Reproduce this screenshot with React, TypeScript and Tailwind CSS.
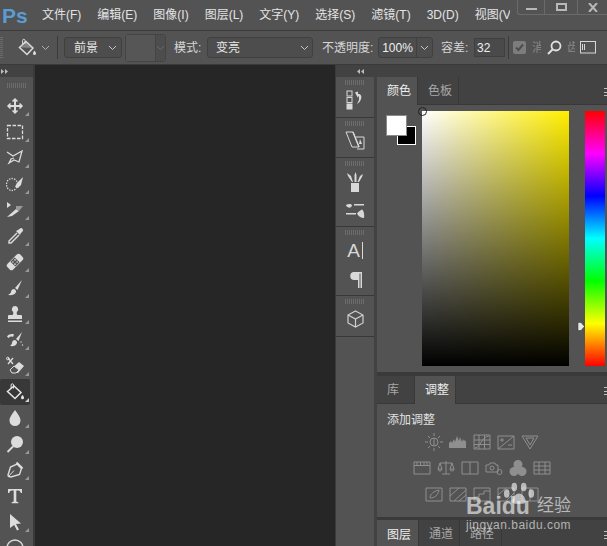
import type { ReactNode } from "react";

// Photoshop workspace: menu bar, options bar, tools, canvas and the docked panels

const menus = ["文件(F)", "编辑(E)", "图像(I)", "图层(L)", "文字(Y)", "选择(S)", "滤镜(T)", "3D(D)", "视图(V)"];

function Chevron({ className = "" }: { className?: string }) {
  return (
    <svg width="9" height="6" viewBox="0 0 9 6" className={className} fill="none" stroke="currentColor" strokeWidth="1">
      <path d="M1 1l3.5 3.5L8 1" />
    </svg>
  );
}

function Bucket({ size = 20 }: { size?: number }) {
  return (
    <svg width={size} height={size} viewBox="0 0 20 20" fill="none" stroke="#dcdcdc" strokeWidth="1.5">
      <path d="M9 3.5l7 6.5-6 6.5-7.5-7z" />
      <path d="M8 6V2.5a1.2 1.2 0 0 0-2.4 0V6" strokeWidth="1" />
      <path d="M4 9.5l5.5-5 6.5 5.5z" fill="#dcdcdc" stroke="none" opacity="0.35" />
      <path d="M17.5 12.5c1 1.4 1.5 2.1 1.5 3a1.5 1.5 0 0 1-3 0c0-.9.5-1.6 1.5-3z" fill="#dcdcdc" stroke="none" />
    </svg>
  );
}

const toolIcons: ReactNode[] = [
  // move
  <g key="move" fill="none" stroke="#dcdcdc" strokeWidth="2">
    <path d="M10 3v14M3 10h14" />
    <path d="M7.5 5.5L10 3l2.5 2.5M7.5 14.5L10 17l2.500-2.500M5.500 7.500L3 10l2.500 2.500M14.500 7.500L17 10l-2.500 2.500" strokeWidth="1.5" />
  </g>,
  // marquee
  <rect key="marquee" x="2.500" y="3.500" width="15" height="13" fill="none" stroke="#dcdcdc" strokeWidth="1.3" strokeDasharray="3.5 1.5" />,
  // lasso
  <path key="lasso" d="M2 4l6 4 9-5-3 11-5-2-5 3 2-4 3-1" fill="none" stroke="#dcdcdc" strokeWidth="1.3" />,
  // quick selection
  <g key="quick">
    <ellipse cx="7" cy="10.5" rx="5.5" ry="6" fill="none" stroke="#dcdcdc" strokeWidth="1.3" strokeDasharray="1.3 1.3" />
    <path d="M18 3l-6 6-2 4 3 1 3-3z" fill="#dcdcdc" />
  </g>,
  // healing slice
  <g key="slice">
    <path d="M2 2l4 3-4 3z" fill="#dcdcdc" />
    <path d="M2 17l9-8 3 2-7 5z" fill="#dcdcdc" />
    <path d="M11 6h7l-4 5-3-2z" fill="#9a9a9a" />
  </g>,
  // eyedropper
  <g key="dropper">
    <path d="M12 7l-8 8v2h2l8-8" fill="none" stroke="#dcdcdc" strokeWidth="1.4" />
    <path d="M11 5l4 4 1-2 1.500-1.500a1.800 1.800 0 0 0-2.800-2.800L13 4z" fill="#dcdcdc" />
  </g>,
  // bandage
  <g key="bandage" transform="rotate(-45 10 10)">
    <rect x="1" y="6" width="18" height="8" rx="2.500" fill="#dcdcdc" />
    <rect x="7" y="6.500" width="6" height="7" fill="#535353" />
    <circle cx="8.500" cy="8.500" r=".8" fill="#dcdcdc" />
    <circle cx="11.500" cy="8.500" r=".8" fill="#dcdcdc" />
    <circle cx="8.500" cy="11.500" r=".8" fill="#dcdcdc" />
    <circle cx="11.500" cy="11.500" r=".8" fill="#dcdcdc" />
  </g>,
  // brush
  <path key="brush" d="M17 2l-7 8 2.500 2zM9 11c-2 0-3 1.500-3 3 0 1-1.500 2-3 3 3 .5 7 0 8-3 .3-1 0-2-2-3z" fill="#dcdcdc" />,
  // stamp
  <path key="stamp" d="M10 2a3.200 3.200 0 0 0-2 5.700c.5.800.5 2.300-.500 3.300H4a1 1 0 0 0-1 1v3h14v-3a1 1 0 0 0-1-1h-3.500c-1-1-1-2.500-.500-3.300A3.200 3.200 0 0 0 10 2zM3 16.500h14V18H3z" fill="#dcdcdc" />,
  // history brush
  <g key="history" fill="#dcdcdc">
    <path d="M17 2l-6 7 2.500 2zM10 10c-2 0-3 1.500-3 3 0 1-1 2-2 3 3 .5 6 0 7-3 .2-1-.2-2-2-3z" />
    <path d="M2 6.500C4 4 7 3.500 9 4.500L8 7C6.500 6.300 5 6.500 3.500 8z" />
    <circle cx="16" cy="12" r=".7" />
    <circle cx="17.500" cy="15" r=".7" />
  </g>,
  // eraser
  <g key="eraser">
    <path d="M3 2l5 6M8 2L3 8" stroke="#dcdcdc" strokeWidth="1.300" />
    <circle cx="2.800" cy="2.500" r="1.300" fill="none" stroke="#dcdcdc" />
    <path d="M14 6l5 4-6 7H7l-2-3z" fill="#dcdcdc" />
    <path d="M5 14l4-4 5 4-3 3H7z" fill="#535353" stroke="#dcdcdc" />
  </g>,
  // bucket
  <g key="bucket" fill="none" stroke="#e6e6e6" strokeWidth="1.500">
    <path d="M9 4l7 6.500-6 6-7.500-7z" />
    <path d="M8.500 6.500V3a1.200 1.200 0 0 0-2.400 0v3.500" strokeWidth="1" />
    <path d="M17.500 13c1 1.300 1.500 2 1.500 2.800a1.500 1.500 0 0 1-3 0c0-.8.500-1.500 1.500-2.800z" fill="#e6e6e6" stroke="none" />
  </g>,
  // blur
  <path key="blur" d="M10 2c3.500 5 5.500 7.500 5.500 10.500a5.500 5.500 0 0 1-11 0C4.500 9.500 6.500 7 10 2z" fill="#dcdcdc" />,
  // dodge
  <g key="dodge">
    <circle cx="12" cy="8" r="6" fill="#dcdcdc" />
    <path d="M8 12.500L2.500 18" stroke="#dcdcdc" strokeWidth="1.800" />
  </g>,
  // pen
  <g key="pen" fill="none" stroke="#dcdcdc" strokeWidth="1.400">
    <path d="M12 4l4.500 4.500-2 6L6 17l-2.500-.5L3 15l2.500-8z" />
    <path d="M3.500 16.500L9 10.500" strokeWidth="1" />
    <path d="M11.500 2.500l6 6" strokeWidth="2.200" />
  </g>,
  // type
  <path key="type" d="M3 3h14v4h-1.300c-.2-1.500-.8-2.400-2.700-2.400h-1.700V15c0 .8.500 1 2 1v1.300H6.700V16c1.500 0 2-.2 2-1V4.600H7c-1.900 0-2.500.9-2.700 2.400H3z" fill="#dcdcdc" />,
  // path selection
  <path key="arrow" d="M5 2l11 9.500-5 .5 3 5.500-2 1-2.800-5.500L5 16z" fill="#dcdcdc" />,
  // shape
  <circle key="shape" cx="10" cy="10" r="8" fill="none" stroke="#dcdcdc" strokeWidth="1.400" />,
];

function Grip({ className = "" }: { className?: string }) {
  return (
    <div className={`h-[5px] w-[20px] shrink-0 bg-[repeating-linear-gradient(to_right,#6c6c6c_0,#6c6c6c_1px,transparent_1px,transparent_2px)] ${className}`} />
  );
}

function ToolBar() {
  return (
    <div className="flex w-[33px] shrink-0 flex-col overflow-hidden bg-[#535353]">
      <div className="flex h-[12px] shrink-0 items-center bg-[#424242] pl-[1px] text-[#bdbdbd]">
        <svg width="8" height="5" viewBox="0 0 8 5" fill="currentColor"><path d="M0 0l3 2.500L0 5zM4 0l3 2.500L4 5z" /></svg>
      </div>
      <div className="flex h-[16px] shrink-0 items-center justify-center">
        <Grip />
      </div>
      {toolIcons.map((icon, i) => (
        <div
          key={i}
          className={`relative flex h-[26px] w-[30px] shrink-0 items-center justify-center rounded-[2px] ${i === 11 ? "bg-[#383838]" : ""}`}
        >
          <svg width="20" height="20" viewBox="0 0 20 20">{icon}</svg>
          {i !== 15 && i < 17 ? (
            <div className={`absolute bottom-[3px] right-[1px] h-0 w-0 border-b-[4px] border-l-[4px] border-l-transparent ${i === 11 ? "border-b-[#d0d0d0]" : "border-b-[#9a9a9a]"}`} />
          ) : null}
        </div>
      ))}
    </div>
  );
}

function OptionBar() {
  return (
    <div className="flex h-[34px] shrink-0 items-center border-b border-[#3a3a3a] bg-[#535353] text-[12px] text-[#d6d6d6]">
      <div className="h-[21px] w-[3px] bg-[repeating-linear-gradient(to_bottom,#6c6c6c_0,#6c6c6c_1px,transparent_1px,transparent_2px)]" />
      <div className="ml-[14px]"><Bucket /></div>
      <Chevron className="ml-[4px] text-[#b0b0b0]" />
      <div className="ml-[7px] h-[23px] w-px bg-[#3a3a3a]" />
      <div className="ml-[6px] flex h-[21px] w-[58px] items-center justify-between rounded-[3px] border border-[#404040] bg-[#4d4d4d] pl-[9px] pr-[4px] text-[#e6e6e6]">
        <span>前景</span>
        <Chevron className="text-[#c8c8c8]" />
      </div>
      <div className="ml-[3px] flex h-[28px] w-[41px] items-stretch rounded-[3px] border border-[#444444]">
        <div className="w-[29px] bg-[#565656]" />
        <div className="flex flex-1 items-center justify-center border-l border-[#444444] bg-[#4d4d4d] text-[#6b6b6b]">
          <Chevron />
        </div>
      </div>
      <span className="ml-[8px] w-[33px] whitespace-nowrap">模式:</span>
      <div className="flex h-[21px] w-[106px] items-center justify-between rounded-[3px] border border-[#404040] bg-[#4d4d4d] pl-[8px] pr-[3px] text-[#e6e6e6]">
        <span>变亮</span>
        <Chevron className="text-[#c8c8c8]" />
      </div>
      <span className="ml-[9px] w-[56px] whitespace-nowrap">不透明度:</span>
      <div className="flex h-[21px] w-[55px] items-stretch rounded-[3px] border border-[#404040] bg-[#4d4d4d] text-[#f0f0f0]">
        <div className="flex w-[38px] items-center justify-center border-r border-[#404040]">100%</div>
        <div className="flex flex-1 items-center justify-center text-[#c8c8c8]"><Chevron /></div>
      </div>
      <span className="ml-[8px] w-[33px] whitespace-nowrap">容差:</span>
      <div className="flex h-[19px] w-[31px] items-center border border-[#404040] bg-[#4a4a4a] pl-[2px] text-[#f0f0f0]">32</div>
      <div className="ml-[3px] h-[23px] w-px bg-[#3a3a3a]" />
      <div className="ml-[4px] flex h-[13px] w-[13px] items-center justify-center rounded-[2px] bg-[#7d7d7d]">
        <svg width="11" height="11" viewBox="0 0 11 11" fill="none" stroke="#4d4d4d" strokeWidth="2"><path d="M2 5.500l2.500 2.500L9 2.500" /></svg>
      </div>
      <span className="ml-[6px] w-[9px] overflow-hidden whitespace-nowrap text-[#8a8a8a]">消</span>
      <svg className="ml-[6px]" width="15" height="15" viewBox="0 0 15 15" fill="none" stroke="#e0e0e0" strokeWidth="1.800">
        <circle cx="9" cy="6" r="4.500" />
        <path d="M5.500 9.500L1 14" strokeWidth="2" />
      </svg>
      <span className="ml-[5px] w-[8px] overflow-hidden whitespace-nowrap text-[#8a8a8a]">齿</span>
      <svg className="ml-[5px]" width="16" height="13" viewBox="0 0 16 13" fill="none" stroke="#d6d6d6">
        <rect x=".5" y=".5" width="15" height="11.500" />
        <path d="M2.500 3v6M4.500 3v6" />
      </svg>
    </div>
  );
}

function PanelTabs({ tabs, active, className = "" }: { tabs: [string, number][]; active: number; className?: string }) {
  return (
    <div className={`flex shrink-0 bg-[#424242] ${className}`}>
      {tabs.map(([label, width], i) => (
        <div
          key={label}
          style={{ width }}
          className={`flex items-center border-r border-[#383838] pl-[10px] text-[12px] ${i === active ? "bg-[#535353] text-[#eeeeee]" : "border-b border-b-[#383838] text-[#a8a8a8]"}`}
        >
          {label}
        </div>
      ))}
      <div className="flex-1 border-b border-[#383838]" />
      <div className="absolute right-0 flex h-[8px] w-[3px] translate-y-[11px] flex-col justify-between">
        <div className="h-px bg-[#c0c0c0]" />
        <div className="h-px bg-[#c0c0c0]" />
        <div className="h-px bg-[#c0c0c0]" />
      </div>
    </div>
  );
}

function Dock() {
  const icons: ReactNode[][] = [
    [
      <svg key="history" width="18" height="20" viewBox="0 0 18 20" fill="none" stroke="#d8d8d8">
        <rect x="1" y="1" width="5" height="5" />
        <rect x="1" y="7.500" width="5" height="5" />
        <rect x="1" y="14" width="5" height="5" fill="#d8d8d8" />
        <path d="M9 2.500l3-1v2.500c3-.5 4 2.500 3 5-.6 2-2 4-4 5 1-2 2.500-4 2-6.500-.3-1.200-1-1.500-1-1.500v2z" fill="#d8d8d8" stroke="none" />
      </svg>,
    ],
    [
      <svg key="clone" width="20" height="19" viewBox="0 0 20 19" fill="none" stroke="#d8d8d8">
        <path d="M1 1h7l6 15H7z" />
        <path d="M8 1l6 15" strokeWidth="1.400" />
        <path d="M11 6h8v12h-7" />
        <path d="M15 8l2 5h-3z" fill="#d8d8d8" stroke="none" />
      </svg>,
    ],
    [
      <svg key="brushes" width="18" height="20" viewBox="0 0 18 20" fill="#d8d8d8">
        <rect x="5" y="11" width="8" height="9" />
        <path d="M6 10L2 4l-1-3 4 3 2 6zM8.500 10V3L9.500 0l1 3v7zM11.500 10L14 4l3-2-1 3-3 5z" />
      </svg>,
      <svg key="presets" width="20" height="16" viewBox="0 0 20 16" fill="#d8d8d8">
        <path d="M9 1h10v1.500H9zM1 10h10v1.500H1z" />
        <path d="M1 2c2-1.500 5-1.500 6 0 0 2-2 3-3.500 2.500C2 4 1 3 1 2z" />
        <path d="M19 15c-3 0-6-2-7-4.500 1.500-2 4-3.500 5-4 2 1 2.500 6 2 8.500z" />
      </svg>,
    ],
    [
      <div key="char" className="flex items-center text-[19px] leading-none text-[#d8d8d8]">A<div className="ml-[2px] h-[17px] w-px bg-[#d8d8d8]" /></div>,
      <svg key="para" width="13" height="17" viewBox="0 0 13 17" fill="#d8d8d8">
        <path d="M5 1h8v16h-1.500V2.500h-1V17H9V9H5.500a4 4 0 0 1-.5-8z" />
      </svg>,
    ],
    [
      <svg key="cube" width="17" height="18" viewBox="0 0 17 18" fill="none" stroke="#cfcfcf" strokeWidth="1.200">
        <path d="M8.500 1L16 5v8l-7.500 4L1 13V5z" />
        <path d="M1 5l7.500 4L16 5M8.500 9v8" />
      </svg>,
    ],
  ];
  const heights = ["h-[41px]", "h-[40px]", "h-[69px]", "h-[69px]", "h-[41px]"];
  return (
    <div className="flex w-[38px] shrink-0 flex-col bg-[#3e3e3e]">
      <div className="flex h-[12px] shrink-0 items-center justify-end bg-[#424242] pr-[9px] text-[#bdbdbd]">
        <svg width="8" height="5" viewBox="0 0 8 5" fill="currentColor"><path d="M3 0L0 2.500 3 5zM7 0L4 2.500 7 5z" /></svg>
      </div>
      {icons.map((group, i) => (
        <div key={i} className={`flex shrink-0 flex-col items-center border-b border-[#383838] bg-[#535353] pt-[3px] ${heights[i]}`}>
          <Grip />
          <div className="flex flex-1 flex-col items-center justify-around pb-[2px]">{group}</div>
        </div>
      ))}
      <div className="flex-1 bg-[#535353]" />
    </div>
  );
}

function AdjustIcon({ d, fill }: { d: string; fill?: boolean }) {
  return (
    <svg width="18" height="18" viewBox="0 0 18 18" fill={fill ? "#8f8f8f" : "none"} stroke={fill ? "none" : "#8f8f8f"} strokeWidth="1">
      <path d={d} />
    </svg>
  );
}

const adjustRows: string[][] = [
  [
    "M9 5a4 4 0 1 1 0 8zM9 5a4 4 0 0 0 0 8M9 0v3M9 15v3M0 9h3M15 9h3M3 3l2 2M13 13l2 2M15 3l-2 2M5 13l-2 2",
    "M0 15V10l2-2 1 2 2-4 1 3 2-6 2 5 1-4 2 5 1-3 1 2 1-1 1 2v6z",
    "M1 2h16v14H1zM1 7h16M1 11.500h16M6 2v14M11.500 2v14M2 15C8 14 8 4 16 3",
    "M1 3h16v13H1zM1 16L17 3M3 7h4M5 5v4M11 12h4",
    "M1 3h16L9 16zM5 5h8l-4 7z",
  ],
  [
    "M1 3h16v12H1zM1 6.500h16M4 3v3.500M7.500 3v3.500M11 3v3.500M14 3v3.500",
    "M9 2v13M5 15h8M3 4h12M3 4L1 10h4zM15 4l-2 6h4zM1 10a2 2 0 0 0 4 0M13 10a2 2 0 0 0 4 0",
    "M1 3h16v12H1zM9 3v12",
    "M1 6h3l1-2h5l1 2h2v7H1zM5 9a2 2 0 1 0 4 0 2 2 0 0 0-4 0M12 13a2.500 2.500 0 1 0 5 0 2.500 2.500 0 0 0-5 0",
    "M9 1a4.500 4.500 0 1 0 0 9 4.500 4.500 0 0 0 0-9M5 8a4.500 4.500 0 1 0 0 9 4.500 4.500 0 0 0 0-9M13 8a4.500 4.500 0 1 0 0 9 4.500 4.500 0 0 0 0-9",
    "M1 3h16v12H1zM1 7h16M1 11h16M6 3v12M12 3v12",
  ],
  [
    "M1 3h16v13H1zM5 13c0-4 4-7 9-8-1 5-4 8-9 8z",
    "M1 3h16v13H1zM1 11L10 3M5 16L17 5M10 16l7-6",
    "M1 3h16v13H1zM1 12h5V9h5V6h6",
    "M1 3h16v13H1zM1 10l8-7M9 16l8-8",
    "M1 3h16v13H1zM9 3v13",
  ],
];

function SidePanels() {
  return (
    <div className="relative flex w-[230px] shrink-0 flex-col bg-[#383838]">
      <div className="h-[12px] shrink-0 bg-[#424242]" />
      <PanelTabs className="h-[28px]" tabs={[["颜色", 41], ["色板", 41]]} active={0} />
      <div className="flex h-[267px] shrink-0 bg-[#535353] pt-[6px]">
        <div className="relative ml-[9px] mt-[4px] h-[30px] w-[30px]">
          <div className="absolute bottom-0 right-0 h-[19px] w-[19px] border border-white bg-black" />
          <div className="absolute left-0 top-0 h-[21px] w-[21px] border border-[#8a8a8a] bg-white" />
        </div>
        <div className="relative ml-[6px] h-[255px] w-[147px] bg-[linear-gradient(to_right,#ffffff,#ffee00)]">
          <div className="h-full w-full bg-[linear-gradient(to_bottom,transparent,#000000)]" />
          <div className="absolute -left-[4px] -top-[4px] h-[9px] w-[9px] rounded-full border border-[#222222] bg-transparent" />
        </div>
        <div className="relative ml-[16px] h-[255px] w-[20px] bg-[linear-gradient(to_bottom,#ff0000,#ff00ff,#0000ff,#00ffff,#00ff00,#ffff00,#ff0000)]">
          <svg className="absolute -left-[8px] top-[211px]" width="8" height="9" viewBox="0 0 8 9" fill="#e8e8e8" stroke="#333333" strokeWidth=".5">
            <path d="M1 .5h3L7.500 4.500 4 8.500H1z" />
          </svg>
        </div>
      </div>
      <div className="h-[4px] shrink-0 bg-[#3a3a3a]" />
      <PanelTabs className="h-[28px]" tabs={[["库", 38], ["调整", 41]]} active={1} />
      <div className="h-[113px] shrink-0 bg-[#535353] pt-[8px]">
        <div className="pl-[10px] text-[12px] leading-[16px] text-[#e0e0e0]">添加调整</div>
        <div className="mt-[5px] flex flex-col gap-[8px]">
          {adjustRows.map((row, r) => (
            <div key={r} className={`flex h-[18px] ${r === 1 ? "pl-[33px]" : "pl-[45px]"}`}>
              {row.map((d, i) => (
                <div key={i} className="flex w-[24px] justify-center">
                  <AdjustIcon d={d} fill={(r === 0 && i === 1) || (r === 1 && i === 4)} />
                </div>
              ))}
            </div>
          ))}
        </div>
      </div>
      <div className="h-[3px] shrink-0 bg-[#3a3a3a]" />
      <PanelTabs className="h-[29px]" tabs={[["图层", 42], ["通道", 41], ["路径", 42]]} active={0} />
    </div>
  );
}

export default function App() {
  return (
    <div className="relative flex h-[546px] w-[607px] flex-col overflow-hidden bg-[#535353] font-['Liberation_Sans','Noto_Sans_CJK_SC',sans-serif]">
      {/* Menu bar */}
      <div className="flex h-[31px] shrink-0 items-center border-b border-[#3a3a3a] bg-[#535353]">
        <span className="ml-[2px] w-[40px] text-[21px] font-bold leading-none text-[#5b9bd1]">Ps</span>
        <div className="flex w-[468px] gap-[16px] overflow-hidden whitespace-nowrap text-[12px] text-[#e4e4e4]">
          {menus.map((m) => (
            <span key={m}>{m}</span>
          ))}
        </div>
      </div>

      {/* Window buttons */}
      <div className="absolute right-0 top-0 flex h-[15px] w-[90px] rounded-bl-[3px] border-b border-l border-[#6a6a6a] bg-[#535353]">
        <div className="flex w-[27px] items-center justify-center border-r border-[#6a6a6a] pt-[3px]">
          <div className="h-[2px] w-[11px] bg-[#b8b8b8]" />
        </div>
        <div className="flex w-[33px] items-center justify-center border-r border-[#6a6a6a]">
          <div className="h-[8px] w-[11px] border-2 border-[#b8b8b8]" />
        </div>
        <div className="flex flex-1 items-center justify-center">
          <svg width="10" height="9" viewBox="0 0 10 9" stroke="#b8b8b8" strokeWidth="2"><path d="M1 0l8 9M9 0L1 9" /></svg>
        </div>
      </div>

      <OptionBar />

      {/* Workspace */}
      <div className="flex min-h-0 flex-1">
        <ToolBar />
        <div className="w-[2px] shrink-0 bg-[#3a3a3a]" />
        <div className="w-[300px] shrink-0 bg-[#262626]" />
        <div className="w-px shrink-0 bg-[#3a3a3a]" />
        <Dock />
        <div className="w-[3px] shrink-0 bg-[#424242]" />
        <SidePanels />
      </div>

      {/* Baidu jingyan watermark */}
      <div className="pointer-events-none absolute left-[466px] top-[480px] flex w-[105px] flex-col items-center text-white/60">
        <svg width="34" height="23" viewBox="0 0 36 24" fill="currentColor" className="absolute left-[36px] top-[2px]">
          <ellipse cx="5" cy="12" rx="3" ry="4.500" />
          <ellipse cx="13" cy="5" rx="3" ry="4.500" />
          <ellipse cx="23" cy="5" rx="3" ry="4.500" />
          <ellipse cx="31" cy="12" rx="3" ry="4.500" />
          <path d="M18 12c-4 0-7 5-7 8 0 3 3 3 7 3s7 0 7-3c0-3-3-8-7-8z" />
        </svg>
        <div className="mt-[13px] flex w-full items-center justify-between text-[23px] font-bold leading-[26px]">
          <span>Baidu</span>
          <span className="text-[17px] font-normal">经验</span>
        </div>
        <div className="-mt-[1px] whitespace-nowrap text-[12px] leading-[14px] tracking-[0.5px]">jingyan.baidu.com</div>
      </div>
    </div>
  );
}
